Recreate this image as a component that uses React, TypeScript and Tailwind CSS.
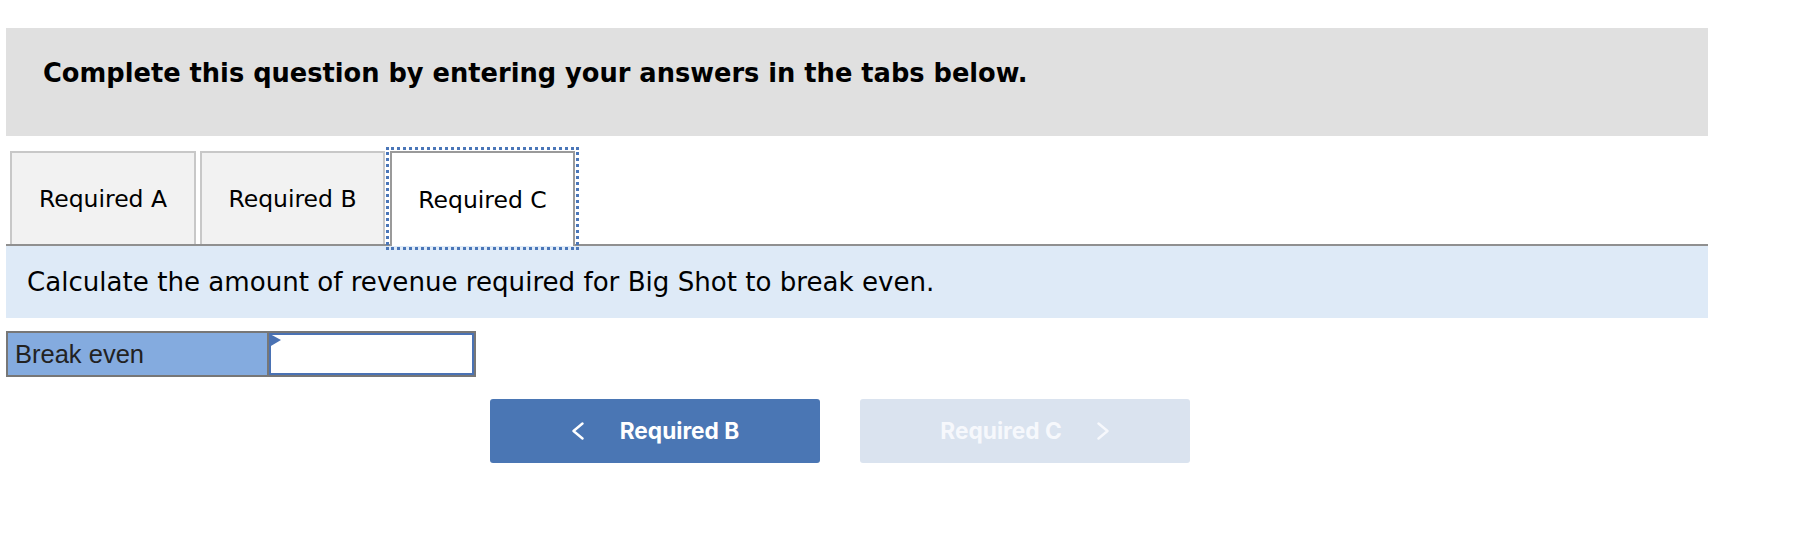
import { useState } from "react";

const verdana = { fontFamily: '"DejaVu Sans", Verdana, sans-serif' };
const arial = { fontFamily: '"Liberation Sans", Arial, sans-serif' };
const inter = { fontFamily: 'Inter, "Open Sans", sans-serif' };

const ChevronLeft = () => (
  <svg width="14" height="18" viewBox="0 0 14 18" fill="none">
    <polyline
      points="11.5,1.5 2.5,9 11.5,16.5"
      stroke="currentColor"
      strokeWidth="2.4"
      strokeLinecap="round"
      strokeLinejoin="round"
    />
  </svg>
);

const ChevronRight = () => (
  <svg width="14" height="18" viewBox="0 0 14 18" fill="none">
    <polyline
      points="2.5,1.5 11.5,9 2.5,16.5"
      stroke="currentColor"
      strokeWidth="2.4"
      strokeLinecap="round"
      strokeLinejoin="round"
    />
  </svg>
);

const tabs = ["Required A", "Required B", "Required C"];

const App = () => {
  const [active, setActive] = useState(2);
  const [value, setValue] = useState("");

  return (
    <div className="min-h-[542px] w-full bg-white pt-[28px] pl-[6px]">
      <div className="w-[1702px]">
        {/* instructions header */}
        <div className="h-[108px] bg-[#e0e0e0] pl-[37px] pt-[30px]">
          <h2
            className="text-[25.7px] leading-[30px] font-bold text-black"
            style={verdana}
          >
            Complete this question by entering your answers in the tabs below.
          </h2>
        </div>

        {/* tabs */}
        <div className="mt-[15px] flex items-start pl-[4px] h-[93px]">
          {tabs.map((tab, i) => {
            const isActive = i === active;
            return (
              <button
                key={tab}
                onClick={() => setActive(i)}
                className={
                  isActive
                    ? "relative z-10 ml-[5px] flex h-[95px] w-[185px] items-center justify-center border-2 border-b-0 border-[#9a9a9a] bg-white pt-[3px] text-[23.5px] text-black outline-[3px] outline-dotted outline-offset-[1px] outline-[#4a76b8]"
                    : i === 0
                    ? "flex h-[93px] w-[186px] items-center justify-center border-2 border-b-0 border-[#c8c8c8] bg-[#f2f2f2] pt-[3px] text-[23.5px] text-black"
                    : "ml-[4px] flex h-[93px] w-[185px] items-center justify-center border-2 border-b-0 border-[#c8c8c8] bg-[#f2f2f2] pt-[3px] text-[23.5px] text-black"
                }
                style={verdana}
              >
                {tab}
              </button>
            );
          })}
        </div>
        <div className="h-[2px] bg-[#909090]" />

        {/* question prompt */}
        <div className="flex h-[72px] items-center bg-[#deeaf7] pl-[21px] pt-[2px]">
          <p className="text-[26.1px] text-black" style={verdana}>
            Calculate the amount of revenue required for Big Shot to break even.
          </p>
        </div>

        {/* answer row */}
        <div className="mt-[13px] flex h-[46px] w-[470px] border-2 border-[#777777]">
          <div
            className="flex w-[261px] items-center border-r-2 border-[#777777] bg-[#84abdf] pl-[7px] text-[25.5px] text-[#222222]"
            style={arial}
          >
            Break even
          </div>
          <div className="relative flex-1">
            <input
              value={value}
              onChange={(e) => setValue(e.target.value)}
              className="h-full w-full border-2 border-[#4a72b4] bg-white px-2 text-[22px] outline-none"
              style={arial}
            />
            <svg
              className="absolute left-[1px] top-[1px]"
              width="12"
              height="13"
              viewBox="0 0 12 13"
            >
              <polygon points="0,0 11,6 0,12.5" fill="#4a72b4" />
            </svg>
          </div>
        </div>

        {/* navigation */}
        <div className="mt-[22px] ml-[484px] flex gap-[40px]">
          <button
            className="flex h-[64px] w-[330px] items-center justify-center gap-[35px] rounded-[3px] bg-[#4a76b4] text-white"
            style={inter}
          >
            <ChevronLeft />
            <span className="text-[22.7px] font-bold">Required B</span>
          </button>
          <button
            disabled
            className="flex h-[64px] w-[330px] items-center justify-center gap-[34px] rounded-[3px] bg-[#dae3ef] text-[#f6f8fc]"
            style={inter}
          >
            <span className="text-[22.7px] font-bold">Required C</span>
            <ChevronRight />
          </button>
        </div>
      </div>
    </div>
  );
};

export default App;
